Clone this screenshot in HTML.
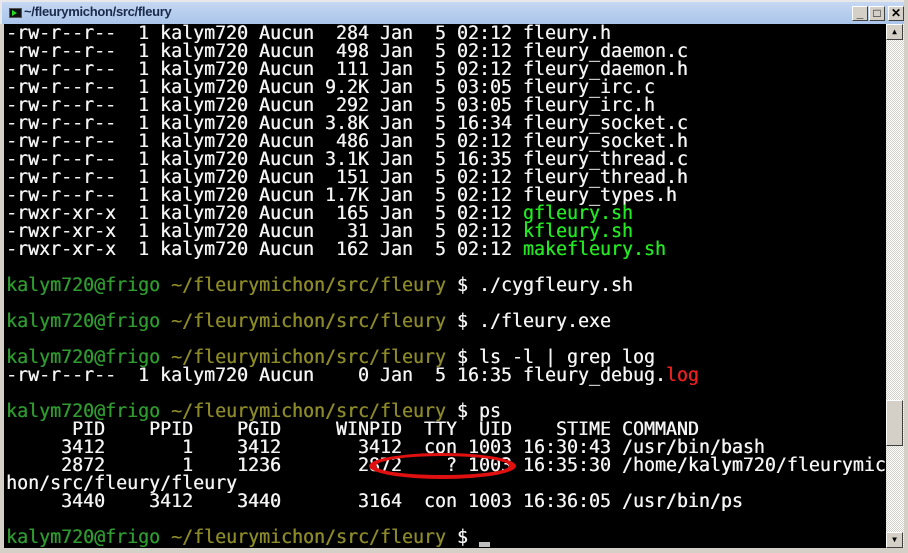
<!DOCTYPE html>
<html><head><meta charset="utf-8"><style>
*{margin:0;padding:0;box-sizing:border-box}
body{width:908px;height:553px;overflow:hidden;background:#d4d0c8;position:relative;font-family:"DejaVu Sans Mono","Liberation Mono",monospace}
#tb{position:absolute;left:0;top:0;width:908px;height:24px;background:linear-gradient(#c6d8f2,#a9c4ea);border:2px solid #e8e8e8;border-bottom:none}
#tb .t{position:absolute;left:22px;top:2px;font:bold 13px "Liberation Sans",sans-serif;color:#1a2a4a;letter-spacing:-0.3px}
#ic{position:absolute;left:7px;top:6px;width:13px;height:10px;background:#111;border:1px solid #555}
#ic:after{content:"";position:absolute;left:2px;top:1px;border-left:5px solid #2d2;border-top:3px solid transparent;border-bottom:3px solid transparent}
.b{position:absolute;top:4px;width:16px;height:15px;background:#d4d0c8;border:1px solid;border-color:#fff #404040 #404040 #fff;font:bold 12px "Liberation Sans",sans-serif;text-align:center;line-height:13px;color:#000}
#term{position:absolute;left:4px;top:24px;width:882px;height:524px;background:#000;overflow:hidden}
pre{position:absolute;left:2px;top:1px;font-family:"DejaVu Sans Mono",monospace;font-size:18.27px;line-height:18px;color:#f4f4f4;white-space:pre;text-shadow:0.4px 0 0 currentColor}
.g{color:#2f9a2f}.y{color:#8c8a28}.G{color:#22e822}.r{color:#e82020}
#sb{position:absolute;left:886px;top:24px;width:18px;height:524px;background:repeating-conic-gradient(#fff 0 25%,#d4d0c8 0 50%) 0 0/2px 2px}
.sbb{position:absolute;left:0;width:17px;height:16px;background:#d4d0c8;border:1px solid;border-color:#fff #404040 #404040 #fff}
#rb{position:absolute;left:904px;top:0;width:4px;height:553px;background:#d4d0c8}
#bb{position:absolute;left:0;top:548px;width:908px;height:5px;background:#d4d0c8}
#ell{position:absolute;left:369px;top:453px;width:147px;height:26px;border-style:solid;border-color:#e01010;border-width:3px 7px 4px 7px;border-radius:50%}
#cur{position:absolute;left:479px;top:542px;width:11px;height:5px;background:#c0c0c0}
</style></head><body>
<div id="tb"><div id="ic"></div><div class="t">~/fleurymichon/src/fleury</div>
<div class="b" style="left:850px">_</div><div class="b" style="left:867px">□</div><div class="b" style="left:886px">✕</div></div>
<div id="term"><pre>-rw-r--r--  1 kalym720 Aucun  284 Jan  5 02:12 fleury.h
-rw-r--r--  1 kalym720 Aucun  498 Jan  5 02:12 fleury_daemon.c
-rw-r--r--  1 kalym720 Aucun  111 Jan  5 02:12 fleury_daemon.h
-rw-r--r--  1 kalym720 Aucun 9.2K Jan  5 03:05 fleury_irc.c
-rw-r--r--  1 kalym720 Aucun  292 Jan  5 03:05 fleury_irc.h
-rw-r--r--  1 kalym720 Aucun 3.8K Jan  5 16:34 fleury_socket.c
-rw-r--r--  1 kalym720 Aucun  486 Jan  5 02:12 fleury_socket.h
-rw-r--r--  1 kalym720 Aucun 3.1K Jan  5 16:35 fleury_thread.c
-rw-r--r--  1 kalym720 Aucun  151 Jan  5 02:12 fleury_thread.h
-rw-r--r--  1 kalym720 Aucun 1.7K Jan  5 02:12 fleury_types.h
-rwxr-xr-x  1 kalym720 Aucun  165 Jan  5 02:12 <span class="G">gfleury.sh</span>
-rwxr-xr-x  1 kalym720 Aucun   31 Jan  5 02:12 <span class="G">kfleury.sh</span>
-rwxr-xr-x  1 kalym720 Aucun  162 Jan  5 02:12 <span class="G">makefleury.sh</span>

<span class="g">kalym720@frigo</span> <span class="y">~/fleurymichon/src/fleury</span> $ ./cygfleury.sh

<span class="g">kalym720@frigo</span> <span class="y">~/fleurymichon/src/fleury</span> $ ./fleury.exe

<span class="g">kalym720@frigo</span> <span class="y">~/fleurymichon/src/fleury</span> $ ls -l | grep log
-rw-r--r--  1 kalym720 Aucun    0 Jan  5 16:35 fleury_debug.<span class="r">log</span>

<span class="g">kalym720@frigo</span> <span class="y">~/fleurymichon/src/fleury</span> $ ps
      PID    PPID    PGID     WINPID  TTY  UID    STIME COMMAND
     3412       1    3412       3412  con 1003 16:30:43 /usr/bin/bash
     2872       1    1236       2872    ? 1003 16:35:30 /home/kalym720/fleurymic
hon/src/fleury/fleury
     3440    3412    3440       3164  con 1003 16:36:05 /usr/bin/ps

<span class="g">kalym720@frigo</span> <span class="y">~/fleurymichon/src/fleury</span> $ </pre></div>
<div id="cur"></div>
<div id="ell"></div>
<div id="sb"><div class="sbb" style="top:0;font-size:8px;text-align:center;line-height:14px">▲</div>
<div class="sbb" style="top:376px;height:46px"></div>
<div class="sbb" style="top:508px;font-size:8px;text-align:center;line-height:14px">▼</div></div>
<div id="rb"></div><div id="bb"></div>
</body></html>
